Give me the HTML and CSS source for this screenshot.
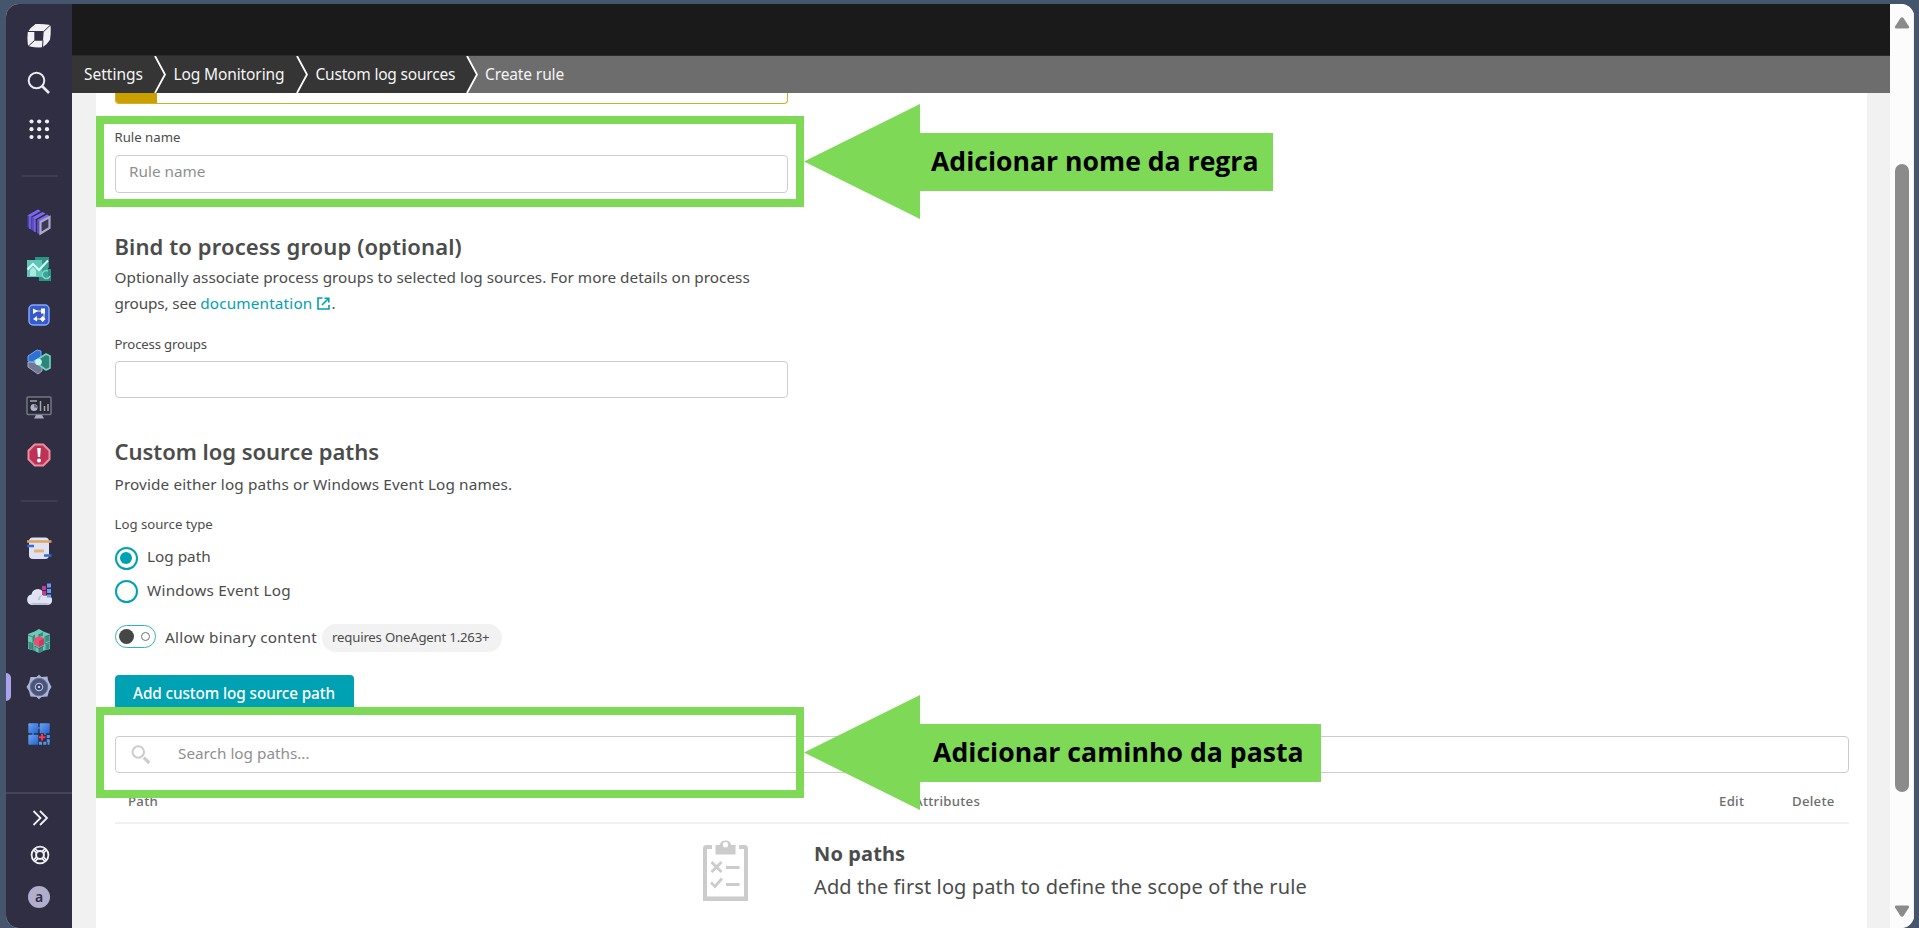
FILE: index.html
```html
<!DOCTYPE html>
<html lang="en">
<head>
<meta charset="utf-8">
<title>Create rule</title>
<link rel="stylesheet" href="styles.css">
</head>
<body>
<div class="window">
  <nav class="sidebar">
    <div class="nav-list">
      <a class="nav-item"><svg width="26" height="26" viewBox="0 0 26 26"><path fill="#f0f0f5" d="M9.500 1Q17 .600 23 1.800q1.700.4 1.700 2 .3 7-.7 13-3 5-7.500 7.500-6.500.5-12.500-.7-2-.4-2.200-2.400Q1 15 1.800 9 5 4 9.500 1z"/><path fill="#2f2e42" d="M8.300 8.500h9.400l-.7 9.200H8.300z"/><path stroke="#2f2e42" stroke-width="1" fill="none" d="M1.500 8.500h16.200L24.500 2M17 17.500l-.6 7.500M8.500 17.500l-6.300 5.800"/></svg></a>
      <a class="nav-item"><svg width="24" height="24" viewBox="0 0 24 24" fill="none" stroke="#e9e9f0" stroke-width="2"><circle cx="9.500" cy="9.500" r="7.800"/><path stroke-width="2.600" d="M15 15l7 7"/></svg></a>
      <a class="nav-item"><svg width="22" height="22" viewBox="0 0 22 22" fill="#f0f0f5"><circle cx="3.500" cy="3.500" r="2.100"/><circle cx="11.200" cy="3.500" r="2.100"/><circle cx="19" cy="3.500" r="2.100"/><circle cx="3.500" cy="11.200" r="2.100"/><circle cx="11.200" cy="11.200" r="2.100"/><circle cx="19" cy="11.200" r="2.100"/><circle cx="3.500" cy="19" r="2.100"/><circle cx="11.200" cy="19" r="2.100"/><circle cx="19" cy="19" r="2.100"/></svg></a>
      <hr class="nav-rule">
      <a class="nav-item"><svg width="26" height="28" viewBox="0 0 26 28"><path fill="#4c3fae" d="M1.500 7.500L12 1.500l3 1.500-9 5.500v14L1.500 19z"/><path fill="#7a68ee" d="M1.500 7.500L12 1.500l2.500 1.500L4 9zM6 9.500L16.500 4l3 1.500L9 11.500zM11 12L21 6.500l3.500 2L14 14z"/><path fill="#5b4cc4" d="M6 9.500l3 2V24L6 22zM11 12l3 2v12.500l-3-1.500z"/><path fill="#3b3a56" stroke="#a9abc9" stroke-width="2.200" d="M14.500 14l9-5v11l-9 5.500z"/><path stroke="#8578f4" stroke-width="1.200" d="M4 9v12M9 11.500V24"/></svg></a>
      <a class="nav-item"><svg width="26" height="26" viewBox="0 0 26 26"><path fill="#2f9287" d="M9 1h14v11H9zM13 13h12v12H13z"/><path fill="#5fc5b7" d="M1 4h15v17H1z"/><path fill="#3ba497" d="M16 7h6v10h-6zM17 16h5v6h-5z"/><path fill="none" stroke="#d9fff5" stroke-width="2" d="M1.500 13.500L7 8l6 6L22 4.500"/><path fill="#a6eadf" d="M4 14l3-3 3 3v6H4z"/><path fill="none" stroke="#7ddbcb" stroke-width="1.500" d="M22 15a4 4 0 1 0 2 5"/></svg></a>
      <a class="nav-item"><svg width="24" height="24" viewBox="0 0 24 24"><rect x="2" y="2" width="20" height="20" rx="4" fill="#345bd0" stroke="#86a8f5" stroke-width="1.500"/><path stroke="#d8b7a0" stroke-width="1.600" fill="none" d="M8 8h9v8H8"/><path fill="#fff" d="M6 5.500l5 2.500-5 3zM14 5.500h4v5h-4zM6 16l4-3v5.500zM13 16l2.500-3 3 3-3 3z"/></svg></a>
      <a class="nav-item"><svg width="26" height="26" viewBox="0 0 26 26"><path fill="#707994" stroke="#a3abc4" d="M2 13v5l10 7 4-3v-5l-5-3z"/><path fill="#2e6fd8" stroke="#75aaf2" d="M2 12V7l9-6 4 1v6L6 13z"/><path fill="#2b8578" stroke="#79d3bf" stroke-width="1.600" stroke-linejoin="round" d="M8.500 12.500L20 5l4 2v12l-4 2z"/><circle cx="12.500" cy="13" r="3.300" fill="#c4f5ef"/></svg></a>
      <a class="nav-item"><svg width="26" height="24" viewBox="0 0 26 24"><rect x="1" y="1" width="24" height="17.500" rx="1" fill="#282a36" stroke="#747685" stroke-width="1.500"/><path stroke="#a5a6b2" stroke-width="1.500" d="M4 5h7M14.500 5v10M18.500 10v5M22 8v7"/><circle cx="8" cy="11.500" r="3.500" fill="#aeb5c9"/><path fill="#657086" d="M8 11.500V8a3.500 3.500 0 0 1 3 4z"/><path fill="#a9abc4" d="M10 19h6l2 3.500H8z"/></svg></a>
      <a class="nav-item"><svg width="24" height="24" viewBox="0 0 24 24"><path fill="#bd3358" stroke="#ef8d9f" stroke-width="2" d="M7.700 1.500h8.600l6.200 6.200v8.600l-6.200 6.200H7.700l-6.200-6.200V7.700z"/><path fill="#fff" d="M10.200 5h3.600l-.7 9h-2.200z"/><circle cx="12" cy="17.500" r="2" fill="#fff"/></svg></a>
      <hr class="nav-rule">
      <a class="nav-item"><svg width="26" height="24" viewBox="0 0 26 24"><rect x="3" y="1.500" width="20" height="21.500" rx="4" fill="#dfe2f4"/><path stroke="#e1a35b" stroke-width="2.500" d="M1 5.500h24.500"/><path stroke="#3468d6" stroke-width="2.500" d="M1 10h7M18 19.500h7.500"/><path stroke="#e4b273" stroke-width="3" d="M8 15h10"/></svg></a>
      <a class="nav-item"><svg width="26" height="26" viewBox="0 0 26 26"><path fill="#dfe3f1" d="M6 24a5.300 5.300 0 0 1-.5-10.500A6.500 6.500 0 0 1 17 10.500v4h5a4.800 4.800 0 0 1 0 9.500z"/><path fill="#b9bfd6" d="M5 22h18a4 4 0 0 1-2 2H7zM12 19a5 5 0 0 1 6-5 5 5 0 0 0-4 5z"/><path fill="#c73b98" d="M16 5h4v4h-4zM16 10h4v4h-4z"/><path fill="#6a9bee" d="M21 2.500h4v4h-4zM21 8h4v4h-4zM21 13.500h4v3h-4z"/></svg></a>
      <a class="nav-item"><svg width="24" height="26" viewBox="0 0 24 26"><path fill="#6fc9b9" d="M12 1l4.500 2.500L23 6v15l-6 1.500-5 2.500-5-2.500L1 21V6l6.500-2.500z"/><path fill="#3d8d83" d="M12 6l4-2v4l-4 1zM6 7.500l2-1v6l-2 1zM22.500 7v6l-4 1V8.500zM1.500 14.500L6 16v6l-4.500-1.500zM22.500 15v5.500l-4 1.500v-5.500zM12 20l4-2v5l-4 2z"/><path stroke="#2f716e" stroke-width=".8" fill="none" d="M1 7l5 2v13M1 14l5 1.500M12 6v3M23 14l-5 2v-7.500L23 7M7.500 18l4.500 2.500 5-2.500M12 20v5M8 18v5"/><path fill="#e9506e" d="M12 8l5 2.500v6L12 19l-5-2.500v-6z"/><path fill="#c53e61" d="M12 13l5-2.500v6L12 19z"/></svg></a>
      <a class="nav-item active"><svg width="26" height="26" viewBox="0 0 26 26"><path fill="#abb5d3" d="M10.500 3L13 .800 15.500 3l6-.5.500 3.500 3.500 7L23 17l-1.500 5.500-6 .5L13 25.200 10.500 23l-6-.5L3 17 .500 13 3 9l1.500-6z"/><circle cx="13" cy="13" r="8.700" fill="#4a5579" stroke="#65709a"/><circle cx="13" cy="13" r="3.600" fill="#333b5c" stroke="#b2bbdb" stroke-width="1.300"/><circle cx="13" cy="13" r="1.300" fill="#c5cce5"/></svg></a>
      <a class="nav-item"><svg width="24" height="24" viewBox="0 0 24 24"><defs><linearGradient id="tile" x1="0" y1="0" x2="1" y2="1"><stop stop-color="#6aa4f2"/><stop offset="1" stop-color="#2463cf"/></linearGradient></defs><rect x="1.300" y="1.300" width="10" height="10" rx="1" fill="url(#tile)"/><rect x="12.700" y="1.300" width="10" height="10" rx="1" fill="url(#tile)"/><rect x="1.300" y="12.700" width="10" height="10" rx="1" fill="url(#tile)"/><path fill="#3470d5" d="M11 5h2v2h-2zM5 11h2v2H5zM17 11h2v2h-2z"/><path stroke="#5195ef" stroke-width="3" stroke-dasharray="3 1.300" fill="none" d="M12 21.300h10.500M21.300 13v8"/><path stroke="#f3365a" stroke-width="2" d="M15 12v6.500M12 15.200h6.500"/></svg></a>
    </div>
    <div class="nav-footer">
      <a class="foot-item"><svg width="18" height="18" viewBox="0 0 18 18" fill="none" stroke="#f0f0f5" stroke-width="1.800"><path d="M2.500 2l7 7-7 7M9 2l7 7-7 7"/></svg></a>
      <a class="foot-item help"><svg width="20" height="20" viewBox="0 0 20 20" fill="none" stroke="#f0f0f5"><circle cx="10" cy="10" r="8.400" stroke-width="1.800"/><circle cx="10" cy="10" r="3.900" stroke-width="2"/><path stroke-width="1.700" d="M3.500 5l3 3M5 3.500l3 3M15 3.500l-3 3M16.500 5l-3 3M3.500 15l3-3M5 16.500l3-3M15 16.500l-3-3M16.500 15l-3-3"/></svg></a>
      <a class="foot-item user"><span class="avatar">a</span></a>
    </div>
  </nav>

  <div class="app">
    <header class="topbar"></header>
    <div class="crumbs">
      <span class="crumb c1">Settings</span>
      <svg class="sep" width="12" height="37" viewBox="0 0 12 37"><path fill="#353535" d="M0 0h12v37H0z"/><path fill="none" stroke="#fff" stroke-width="1.800" d="M1 0l10 18.500L1 37"/></svg>
      <span class="crumb c2">Log Monitoring</span>
      <svg class="sep" width="12" height="37" viewBox="0 0 12 37"><path fill="#353535" d="M0 0h12v37H0z"/><path fill="none" stroke="#fff" stroke-width="1.800" d="M1 0l10 18.500L1 37"/></svg>
      <span class="crumb c3">Custom log sources</span>
      <svg class="sep" width="12" height="37" viewBox="0 0 12 37"><path fill="#353535" d="M0 0h1l10 18.500L1 37H0z"/><path fill="none" stroke="#fff" stroke-width="1.800" d="M1 0l10 18.500L1 37"/></svg>
      <span class="crumb c4">Create rule</span>
    </div>
    <main class="page">
      <div class="banner"><div class="banner-mark"></div></div>
      <label class="label rule-label">Rule name</label>
      <div class="input"><span class="placeholder">Rule name</span></div>

      <h2 class="heading h-bind">Bind to process group (optional)</h2>
      <p class="text p-bind">Optionally associate process groups to selected log sources. For more details on process<br><span class="lead">groups, see </span><a class="link">documentation</a><svg class="ext" width="13" height="13" viewBox="0 0 13 13" fill="none" stroke="#00a1b2" stroke-width="1.600"><path d="M5.500 1H1v11h11V8"/><path d="M5 8l6-6M7.500 1.200h4.300v4.300"/></svg>.</p>
      <label class="label group-label">Process groups</label>
      <div class="input"></div>

      <h2 class="heading h-paths">Custom log source paths</h2>
      <p class="text p-paths">Provide either log paths or Windows Event Log names.</p>
      <label class="label type-label">Log source type</label>
      <div class="radio"><span class="dot on"></span><span>Log path</span></div>
      <div class="radio"><span class="dot"></span><span class="wide">Windows Event Log</span></div>
      <div class="toggle-row">
        <span class="switch"><span class="knob"></span><span class="ring"></span></span>
        <span class="wide">Allow binary content</span>
        <span class="pill">requires OneAgent 1.263+</span>
      </div>
      <button class="button">Add custom log source path</button>
      <div class="search">
        <svg width="20" height="20" viewBox="0 0 20 20" fill="none" stroke="#ccc"><circle cx="7.300" cy="7" r="5.700" stroke-width="2"/><path stroke-width="3.200" d="M12.800 12.700l5.500 5.300"/></svg>
        <span>Search log paths...</span>
      </div>
      <div class="table-head"><span>Path</span><span>Attributes</span><span>Edit</span><span>Delete</span></div>
      <div class="empty">
        <svg width="45" height="62" viewBox="0 0 45 62"><path fill="none" stroke="#ccc" stroke-width="4" d="M9 8H3.500Q2 8 2 9.500V60h41V9.500Q43 8 41.500 8H36"/><path fill="#ccc" d="M0 57.500h45V60q0 2-2 2H2q-2 0-2-2z"/><path fill="#ccc" fill-rule="evenodd" d="M12.500 6h4.200a6 6 0 0 1 11.600 0h4.200v9.500h-20zM22.500 3a2.700 2.700 0 1 0 0 5.400 2.700 2.700 0 0 0 0-5.400z"/><path fill="none" stroke="#ccc" stroke-width="2.800" d="M8.500 23l10 10M18.500 23l-10 10M23 28.500h13.500M8 43.500l4 4 7-8M23 45.500h13.500"/></svg>
        <div class="empty-copy"><strong>No paths</strong><span>Add the first log path to define the scope of the rule</span></div>
      </div>
    </main>
  </div>
  <div class="scrollbar">
    <svg width="16" height="12" viewBox="0 0 16 12"><path fill="#8b8b8b" d="M6.500 1q1.500-1.500 3 0l5.500 8.500q.5 2-1.500 2h-11q-2 0-1.500-2z"/></svg>
    <div class="thumb"></div>
    <svg width="16" height="12" viewBox="0 0 16 12"><path fill="#8b8b8b" d="M6.500 11q1.500 1.500 3 0L15 2.500q.5-2-1.500-2h-11q-2 0-1.500 2z"/></svg>
  </div>
</div>

<div class="frame frame-name"></div>
<div class="frame frame-path"></div>
<div class="arrow arrow-name"><svg width="116" height="115" viewBox="0 0 116 115"><path fill="#7ed957" d="M0 57.500L116 0v115z"/></svg><div class="arrow-body"><span>Adicionar nome da regra</span></div></div>
<div class="arrow arrow-path"><svg width="116" height="115" viewBox="0 0 116 115"><path fill="#7ed957" d="M0 57.500L116 0v115z"/></svg><div class="arrow-body"><span>Adicionar caminho da pasta</span></div></div>
</body>
</html>
```
FILE: styles.css
```css
* { box-sizing: border-box; }
body {
  margin: 0;
  width: 1919px;
  height: 928px;
  overflow: hidden;
  background: #45556c;
  color: #4b4c4c;
  font: 15.300px "Noto Sans", "Open Sans", sans-serif;
  padding: 4px 5px 0 6px;
}
svg { display: block; flex: none; }
span, a { white-space: nowrap; }
.window { display: flex; height: 924px; border-radius: 13px; overflow: hidden; background: #fff; }

.sidebar { width: 66px; background: #2f2e42; display: flex; flex-direction: column; }
.nav-list { height: 790px; padding-top: 9px; display: grid; grid-template-rows: repeat(16, 46.5px); align-content: start; border-bottom: 2px solid #45445a; }
.nav-item { display: flex; align-items: center; justify-content: center; position: relative; }
.nav-item.active::before { content: ""; position: absolute; left: 0; top: 9px; width: 5px; height: 28px; background: #aaa4ef; border-radius: 0 5px 5px 0; }
.nav-rule { width: 37px; height: 2px; margin: auto; border: 0; background: #3d3c51; }
.nav-footer { padding: 10px 0 0 2px; }
.foot-item { display: flex; justify-content: center; height: 28px; align-items: center; }
.foot-item.help { margin-top: 9px; }
.foot-item.user { margin: 14px 2px 0 0; }
.avatar { width: 22px; height: 22px; border-radius: 50%; background: #b1aecb; color: #2f2e42; font-size: 14px; font-weight: 600; line-height: 21px; text-align: center; }

.app { width: 1818px; background: #f1f1f1; display: flex; flex-direction: column; }
.topbar { height: 52px; background: #1a1a1a; border-bottom: 1px solid #2b2b2b; flex: none; }
.crumbs { height: 37px; background: #6d6d6d; display: flex; color: #f4f4f4; flex: none; font-size: 15.500px; letter-spacing: -.12px; }
.crumb { background: #353535; line-height: 36px; padding-left: 8px; }
.c1 { width: 81.500px; padding-left: 12px; letter-spacing: 0; }
.c2 { width: 130px; }
.c3 { width: 158.500px; letter-spacing: -.2px; }
.c4 { background: none; padding-left: 7px; }

.page { width: 1771px; margin-left: 24px; flex: 1; background: #fff; padding: 0 18px 0 18.500px; display: flex; flex-direction: column; }
.banner { width: 673.500px; height: 11px; border: 1px solid #d4ad2d; border-top: 0; border-radius: 0 0 4px 4px; flex: none; }
.banner-mark { width: 41px; height: 10px; background: #c9a000; border-radius: 0 0 0 3px; }
.label { font-size: 13.200px; line-height: 20px; }
.rule-label { margin: 23px 0 8px; }
.input { width: 673.500px; height: 37.500px; border: 1.500px solid #ccc; border-radius: 4px; padding-left: 13.500px; line-height: 31px; flex: none; }
.placeholder { color: #8f8f8f; }
.heading { margin: 0; font-size: 22px; font-weight: 600; line-height: 32px; }
.h-bind { margin-top: 37px; letter-spacing: .11px; }
.text { margin: 0; line-height: 26px; }
.p-bind { margin-top: 2.800px; letter-spacing: .02px; }
.lead { letter-spacing: -.15px; }
.link { color: #00a1b2; letter-spacing: .16px; }
.ext { display: inline-block; margin: 0 1px 0 5px; vertical-align: -1px; }
.group-label { margin: 17.700px 0 7px; letter-spacing: -.17px; }
.h-paths { margin-top: 37px; letter-spacing: -.03px; }
.p-paths { margin-top: 3.300px; letter-spacing: .13px; }
.type-label { margin: 17.200px 0 12.500px; }
.radio { display: flex; align-items: center; height: 24px; margin-bottom: 9.500px; gap: 9.500px; }
.radio span:last-child { margin-top: -4px; }
.wide { letter-spacing: .24px; }
.dot { width: 23px; height: 23px; border: 2px solid #00a1b2; border-radius: 50%; display: grid; place-items: center; }
.dot.on::after { content: ""; width: 12px; height: 12px; border-radius: 50%; background: #00a1b2; }
.toggle-row { display: flex; align-items: center; height: 28px; margin-top: 11px; }
.toggle-row .wide { margin-top: -3px; }
.switch { width: 41.500px; height: 23px; border: 1.500px solid #2fb2c0; border-radius: 12px; display: flex; align-items: center; padding: 0 5px 0 3px; justify-content: space-between; margin: -3px 9px 0 0; }
.knob { width: 15px; height: 15px; border-radius: 50%; background: #454646; }
.ring { width: 9px; height: 9px; border: 1.500px solid #707070; border-radius: 50%; }
.pill { margin-left: 5px; width: 180px; height: 28px; border-radius: 14px; background: #f2f2f2; font-size: 13.200px; line-height: 26px; padding-left: 10px; letter-spacing: -.2px; }
.button { margin: 23px 0 0; width: 239.500px; height: 37px; border: 0; border-radius: 4px; background: #00a1b2; color: #fff; font: 500 15.300px "Noto Sans", sans-serif; letter-spacing: -.1px; padding: 0 0 2px 18.500px; text-align: left; flex: none; }
.search { margin-top: 24px; height: 37px; border: 1.500px solid #ccc; border-radius: 4px; display: flex; align-items: center; padding-left: 15.500px; gap: 27px; color: #8f8f8f; flex: none; }
.search span { margin-top: -4px; }
.table-head { height: 51px; border-bottom: 2px solid #f0f0f0; display: grid; grid-template-columns: 786px 805px 73px 1fr; padding-left: 13.500px; font-size: 13.200px; font-weight: 500; letter-spacing: .28px; line-height: 57px; color: #6d6d6d; flex: none; }
.empty { display: flex; padding: 15px 0 0 588.500px; gap: 66px; }
.empty-copy { display: flex; flex-direction: column; font-size: 20px; line-height: 33px; letter-spacing: .12px; margin-top: -2px; }
.empty-copy strong { font-weight: 700; }

.scrollbar { width: 24px; background: #fcfcfc; display: flex; flex-direction: column; align-items: center; padding: 13px 0 11px; flex: none; border-right: 1px solid #eee; }
.thumb { width: 14px; height: 628px; border-radius: 7px; background: #8b8b8b; margin: 135px 0 auto; }

.frame { position: absolute; left: 96px; width: 708px; height: 91px; border: 8px solid #7ed957; }
.frame-name { top: 116px; }
.frame-path { top: 707px; }
.arrow { position: absolute; left: 804px; display: flex; align-items: center; }
.arrow-name { top: 104px; }
.arrow-path { top: 695px; }
.arrow-body { height: 58px; background: #7ed957; color: #000; font: 700 26.600px/56px "Open Sans", "Noto Sans", sans-serif; margin-left: -1px; padding-left: 12px; }
.arrow-name .arrow-body { width: 354px; }
.arrow-path .arrow-body { width: 402px; padding-left: 14px; letter-spacing: .03px; }
```
